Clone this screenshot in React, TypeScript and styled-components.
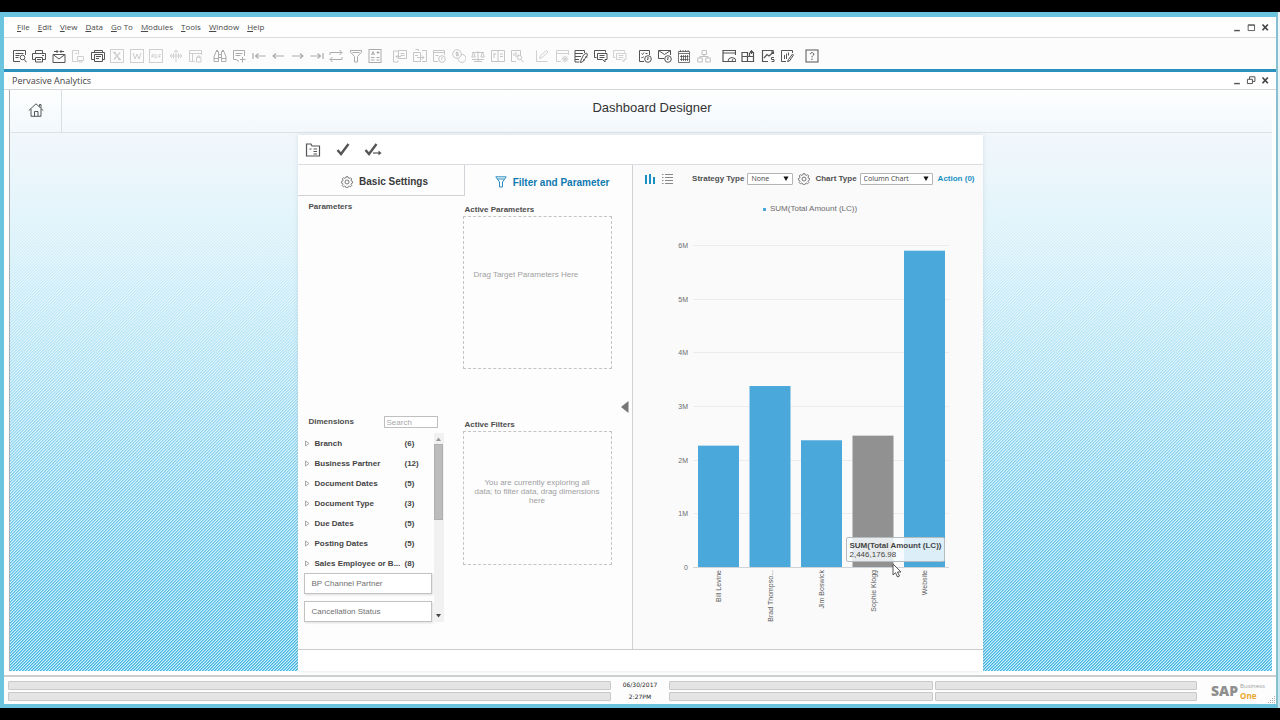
import React from 'react';
import styled, { createGlobalStyle, css } from 'styled-components';

const ui = '"Open Sans", "Noto Sans", sans-serif';
const sans = '"Liberation Sans", Arial, sans-serif';

const GlobalStyle = createGlobalStyle`
  * { box-sizing: border-box; }
  body { margin: 0; background: #000; font-family: ${sans}; font-size: 8px; color: #4a4a4a; }
  button, input, select { font: inherit; color: inherit; margin: 0; }
`;

/* ---------- shell ---------- */

const Screen = styled.div`
  min-height: 100vh;
  padding: 12px 0;
  display: flex;
  background: #000;
`;

const Desktop = styled.div`
  flex: 1;
  min-width: 0;
  display: flex;
  padding-right: 2px;
  background: linear-gradient(#eef6f8, #c4e6ef);
`;

const AppWindow = styled.main`
  flex: 1;
  min-width: 0;
  display: flex;
  flex-direction: column;
  background: #fff;
  border: solid #6ac4de;
  border-width: 5px 2px 4px 4px;
  border-right-color: #86bfcd;
`;

const MenuBar = styled.header`
  display: flex;
  align-items: center;
  height: 21px;
  padding: 0 6px 1px 13px;
  border-bottom: 1px solid #dcdcdc;
  background: #fefefe;
  font-family: ${ui};
`;

const MenuList = styled.nav`
  flex: 1;
  display: flex;
  gap: 8px;
`;

const MenuItem = styled.button`
  padding: 0;
  border: 0;
  background: none;
  line-height: 12px;
  white-space: nowrap;
  color: #4a4a4a;
  u { text-underline-offset: 1px; }
`;

const Controls = styled.div`
  display: flex;
  gap: 4px;
`;

const IconButton = styled.button<{ $size?: number; $color?: string }>`
  display: grid;
  place-items: center;
  flex: none;
  width: ${p => p.$size ?? 14}px;
  height: ${p => p.$size ?? 14}px;
  padding: 0;
  border: 0;
  background: none;
  color: ${p => p.$color ?? '#555'};
  svg { display: block; }
`;

const ToolBar = styled.div`
  display: flex;
  align-items: center;
  gap: 11px;
  height: 31px;
  padding: 4px 9px 0;
  background: #fcfcfc;
`;

const ToolGroup = styled.div<{ $span: number }>`
  display: flex;
  justify-content: space-between;
  width: ${p => p.$span}px;
`;

const TitleBar = styled.div`
  display: flex;
  align-items: center;
  justify-content: space-between;
  height: 21px;
  padding: 0 6px 1px 8px;
  border-top: 3px solid #2a90be;
  border-bottom: 1px solid #d6d6d6;
  font-family: ${ui};
  font-size: 9px;
  color: #444;
`;

const Client = styled.section`
  flex: 1;
  display: flex;
  flex-direction: column;
  margin: 0 4px 4px 5px;
  border-left: 1px solid #a9b0b3;
`;

const PageHeader = styled.div`
  display: grid;
  grid-template-columns: 52px 1fr 52px;
  align-items: stretch;
  height: 43px;
  border-bottom: 1px solid #dbe3e8;
  background: linear-gradient(#fdfefe, #f3f8fc);
`;

const HomeCell = styled.div`
  display: grid;
  place-items: center;
  padding-bottom: 2px;
  border-right: 1px solid #d8dfe3;
`;

const PageTitle = styled.h1`
  margin: 0;
  padding: 9px 0 0 22px;
  text-align: center;
  font-size: 13px;
  line-height: 17px;
  font-weight: 400;
  color: #333;
`;

const Workspace = styled.div`
  flex: 1;
  display: flex;
  justify-content: center;
  padding: 2px 2px 0 0;
  background:
    linear-gradient(#f1f7fb 0%, rgba(240, 248, 252, 0.95) 8%, rgba(236, 249, 253, 0.84) 24%, rgba(230, 247, 253, 0.66) 44%, rgba(222, 245, 253, 0.42) 66%, rgba(214, 243, 253, 0.2) 85%, rgba(210, 242, 253, 0.05) 100%),
    linear-gradient(135deg, #3fafe0 0 25%, #78ceee 25% 42%, #ccf1fb 42% 58%, #3fafe0 58% 75%, #78ceee 75%) 0 0 / 3px 3px;
`;

/* ---------- designer panel ---------- */

const Panel = styled.div`
  display: flex;
  flex-direction: column;
  width: 685px;
  max-width: 100%;
  background: #fff;
  box-shadow: 0 0 4px rgba(120, 150, 165, 0.25);
`;

const PanelTools = styled.div`
  display: flex;
  align-items: center;
  gap: 12px;
  height: 30px;
  padding: 0 6px;
  border-bottom: 1px solid #dcdde2;
`;

const PanelBody = styled.div`
  flex: 1;
  display: grid;
  grid-template-columns: 335fr 350fr;
`;

const PanelFooter = styled.div`
  height: 22px;
  border-top: 1px solid #ccc;
`;

const SettingsPane = styled.div`
  position: relative;
  border-right: 1px solid #d2d2d6;
  background: #fdfdfe;
`;

const Tabs = styled.div`
  display: grid;
  grid-template-columns: 1fr 1fr;
`;

const Tab = styled.button<{ $active?: boolean }>`
  display: flex;
  align-items: center;
  justify-content: center;
  gap: 6px;
  height: 31px;
  padding: 3px 0 0 8px;
  border: 0;
  background: none;
  font-size: 10px;
  font-weight: 700;
  color: #3a3a3a;
  ${p => p.$active
    ? css`color: #1079b0;`
    : css`border: solid #d2d2d8; border-width: 0 1px 1px 0;`}
`;

const Columns = styled.div`
  display: grid;
  grid-template-columns: 165px 149px;
  grid-template-rows: 215px auto;
`;

const SourceCell = styled.div`
  padding: 4px 19px 0 6px;
`;

const TargetCell = styled.div`
  padding-top: 7px;
`;

const Heading = styled.h2<{ $indent: number }>`
  margin: 0;
  padding-left: ${p => p.$indent}px;
  font-size: 8px;
  line-height: 13px;
  font-weight: 700;
  color: #4d4d4d;
`;

const DropZone = styled.div<{ $height: number; $centered?: boolean }>`
  height: ${p => p.$height}px;
  padding: ${p => (p.$centered ? '46px 0 0' : '53px 10px 0')};
  border: 1px dashed #c4c4c4;
  line-height: 9px;
  text-align: ${p => (p.$centered ? 'center' : 'left')};
  white-space: pre-line;
  color: #a0a0a0;
`;

const DimensionsHead = styled.div`
  display: flex;
  align-items: flex-end;
  justify-content: space-between;
  padding: 0 6px 5px 0;
`;

const SearchBox = styled.input`
  width: 54px;
  height: 12px;
  padding: 0 2px;
  border: 1px solid #bfbfbf;
  background: #fff;
  &::placeholder { color: #a8a8a8; opacity: 1; }
`;

const ListFrame = styled.div`
  display: grid;
  grid-template-columns: 1fr 10px;
`;

const DimensionList = styled.ul`
  margin: 0;
  padding: 0 2px 0 0;
  list-style: none;
`;

const DimensionRow = styled.li`
  display: grid;
  grid-template-columns: 11px 90px 1fr;
  align-items: center;
  height: 20px;
  font-weight: 700;
  white-space: nowrap;
  color: #444;
`;

const FieldCard = styled.li`
  height: 21px;
  padding-left: 7px;
  margin-bottom: 7px;
  border: 1px solid #c2c2c2;
  box-shadow: 1px 1px 2px #ddd;
  background: #fff;
  line-height: 19px;
  color: #707070;
  &:last-child { margin-bottom: 0; }
`;

const ScrollTrack = styled.div`
  display: flex;
  flex-direction: column;
  align-items: center;
  padding: 4px 0;
  background: #f1f1f1;
`;

const ScrollThumb = styled.div`
  width: 9px;
  height: 76px;
  margin: 3px 0 auto;
  background: #bcbcbc;
  border: 1px solid #b0b0b0;
`;

const Collapse = styled.button`
  position: absolute;
  top: 50%;
  right: 3px;
  width: 8px;
  height: 12px;
  margin-top: -6px;
  padding: 0;
  border: 0;
  background: none;
  svg { display: block; }
`;

/* ---------- chart pane ---------- */

const ChartPane = styled.div`
  background: #fafafb;
`;

const ChartTools = styled.div`
  display: flex;
  align-items: center;
  height: 27px;
  padding: 0 8px 0 12px;
  gap: 5px;
`;

const ChartField = styled.label`
  display: flex;
  align-items: center;
  gap: 3px;
  font-weight: 700;
  white-space: nowrap;
  color: #505050;
`;

const SelectBox = styled.span<{ $width: number }>`
  position: relative;
  display: block;
  width: ${p => p.$width}px;
  height: 12px;
  svg { position: absolute; right: 4px; top: 3px; pointer-events: none; }
`;

const Select = styled.select`
  display: block;
  width: 100%;
  height: 12px;
  padding: 0 3px;
  appearance: none;
  border: 1px solid #b4b4b4;
  border-radius: 1px;
  background: #fff;
  font-family: ${ui};
  font-size: 7px;
  font-weight: 400;
  line-height: 10px;
  color: #444;
`;

const ViewSwitch = styled.div`
  display: flex;
  gap: 5px;
  margin-right: auto;
`;

const ActionLink = styled.a`
  font-weight: 700;
  text-decoration: none;
  white-space: nowrap;
  color: #1a8fc4;
`;

const ChartArea = styled.div`
  position: relative;
`;

const Chart = styled.svg`
  display: block;
  width: 100%;
  height: auto;
`;

const Tooltip = styled.div`
  position: absolute;
  left: 213px;
  top: 345px;
  width: 99px;
  height: 25px;
  padding: 3px;
  border: 1px solid #b4bcc0;
  border-radius: 2px;
  background: rgba(246, 250, 253, 0.85);
  line-height: 9px;
  white-space: nowrap;
  color: #444;
  strong { display: block; }
`;

const Pointer = styled.svg`
  position: absolute;
  left: 259px;
  top: 371px;
`;

/* ---------- status bar ---------- */

const StatusBar = styled.footer`
  display: flex;
  align-items: center;
  height: 29px;
  padding: 1px 0 0 4px;
  border-top: 2px solid #cdcfcf;
  background: #fdfdfd;
`;

const StatusStack = styled.div<{ $grow: number }>`
  flex: ${p => p.$grow} 1 0;
  display: grid;
  gap: 2px;
  margin-right: 2px;
`;

const StatusField = styled.div`
  height: 9px;
  border: 1px solid #c9c9c9;
  border-radius: 1px;
  background: #e5e4e4;
`;

const Clock = styled.div`
  display: grid;
  gap: 2px;
  width: 56px;
  padding-right: 2px;
  text-align: center;
  font-family: "DejaVu Sans", sans-serif;
  font-size: 6px;
  line-height: 10px;
  color: #222;
`;

const Brand = styled.div`
  display: flex;
  align-items: center;
  gap: 2px;
  width: 69px;
  padding-left: 12px;
  font-family: ${ui};
`;

const BrandMark = styled.span`
  font-size: 14px;
  line-height: 20px;
  font-weight: 800;
  color: #8f8f8f;
`;

const BrandName = styled.span`
  display: grid;
  font-size: 6px;
  line-height: 8px;
  color: #9c9c9c;
  b { font-size: 8px; line-height: 11px; font-weight: 700; color: #eaa62c; }
`;

const Grip = styled.svg`
  align-self: flex-end;
  flex: none;
`;

/* ---------- icons ---------- */

const Glyph = ({ children, size = 14 }: { children: React.ReactNode; size?: number }) => (
  <svg width={size} height={size} viewBox="0 0 14 14" fill="none" stroke="currentColor" strokeWidth="1" aria-hidden="true">
    {children}
  </svg>
);

const clockBadge = <><circle cx="10" cy="10" r="3.3" /><path d="M10 8v2.4h-1" /></>;
const bubble = (
  <>
    <path d="M.5 8.500V1.500h11v2" />
    <path d="M3.500 4.500h9.500v6h-2v2.500l-2.500-2.500h-5z" />
    <path d="M5.500 6.500h5M5.500 8.500h5M.5 8.500h2" />
  </>
);

const glyphs: Record<string, React.ReactNode> = {
  Preview: <><path d="M7 12.500H.5v-11h12V6M2.500 4.500h8M2.500 6.500h4M2.500 8.500h3" /><circle cx="9.500" cy="8.500" r="2.300" /><path d="M11 10.300l2.500 3" /></>,
  Print: <><path d="M3.500 4.500v-3h7v3M3.500 10.500h-3v-6h13v6h-3M3.500 8.500h7v4.500h-7zM5 10.500h4M10 6.500h2" /></>,
  'Send mail': <><path d="M1 5.500h12v8H1zM1 5.500l6 4.500 6-4.500M2 2.500h4M8 2.500h4M4.500 1L6 2.500 4.500 4M9.500 1L8 2.500 9.500 4" /></>,
  Fax: <><path d="M7 12.500H1.500v-11h6v4M4 4.500h2M6.500 7.500h6v4h-6zM8 11.500v1.500h3v-1.500" /></>,
  'Print layout': <><path d="M3.500 3.500v-2h8v2M3.500 10.500h-3v-7h13v7h-2M3.500 5.500h8v7h-8zM5 7.500h5M5 9.500h3" /></>,
  'Export to Excel': <><rect x=".5" y=".5" width="13" height="13" /><path d="M4 3.500l6 7M10 3.500l-6 7M3 3.500h3M8 10.500h3" strokeWidth="1.400" /></>,
  'Export to Word': <><rect x=".5" y=".5" width="13" height="13" /><path d="M3 4l2 6 2-5 2 5 2-6" /></>,
  'Export to PDF': <><rect x=".5" y=".5" width="13" height="13" /><path d="M3 9V5.500h1.500v2H3M6 9V5.500h1l1 1v1.500L7 9H6M10 9V5.500h2M10 7.500h1.500" strokeWidth=".8" /></>,
  'Launch application': <><path d="M7 1v12M1 7h12M5 3l2-2 2 2M3 5L1 7l2 2M11 5l2 2-2 2M4.500 4.500v5M9.500 4.500v5" /></>,
  'Lock screen': <><path d="M7 12.500H1.500v-11h12V6M1.500 4.500h12M4.500 4.500v8" /><path d="M8.500 8.500h4.500v4.500H8.500zM9.500 8.500V7h2.500v1.500" /></>,
  Find: <><path d="M1 12.500V8l2-5.500h2.500v10zM13 12.500V8l-2-5.500H8.500v10zM5.500 5.500h3M5.500 8.500h3M1 9.500h4.500M8.500 9.500H13M3 1.500h2M9 1.500h2" /></>,
  Add: <><path d="M7 12.500l-3-2H1.500v-9h11V7M3.500 4.500h7M3.500 6.500h5M10.500 8v5.500M8 10.500h5.500" /></>,
  'First record': <path d="M1 4v6M13.500 7h-10M6.500 4.500L3.500 7l3 2.500" strokeWidth="1.200" />,
  'Previous record': <path d="M13 7H2M5 4.500L2 7l3 2.500" strokeWidth="1.200" />,
  'Next record': <path d="M1 7h11M9 4.500L12 7 9 9.500" strokeWidth="1.200" />,
  'Last record': <path d="M13 4v6M.5 7h10M7.500 4.500L10.500 7l-3 2.500" strokeWidth="1.200" />,
  Refresh: <path d="M1 6V3.500h12M10.500 1L13 3.500 10.500 6M13 8v2.500H1M3.500 8L1 10.500 3.500 13" />,
  Filter: <path d="M1.500 1.500h11v1.500L8.500 7.500v5.500h-3V7.500L1.500 3zM3.500 3.500h7" />,
  Sort: <><rect x="1" y=".5" width="12" height="13" /><path d="M3.500 6l1.500-3.500L6.500 6M4 5h2M8.500 3.500h3M10 2v3M3 8.500h3.500M3 11h3.500M8.500 8.500h3M8.500 11h3" /></>,
  'Base document': <><path d="M5 11.500v1.500H.5v-11H5M5.500 1.500h8v8h-8zM7.500 4.500h4M7.500 6.500h4M8 7.500H3M5 5.500l-2 2 2 2" /></>,
  'Target document': <><path d="M5.500 2V.5h-3M.5 3.500h7v9h-7zM9 1.500h4.500v11H9M2 6.500h3M4 8.500h7M9 6.500l2 2-2 2" /></>,
  'Gross profit': <><path d="M6 12.500H1.500v-11h11V6M1.500 3.500h11M3.500 6.500h3" />{clockBadge}</>,
  'Payment means': <><circle cx="5" cy="5" r="4.300" /><path d="M6.500 3.500H4v1.500h2.500v1.500H4M5 2.500v5M9 5.500a4 4 0 1 1-3 4.500" /></>,
  'Volume and weight': <path d="M7 2v10M3 12.500h8M1 3.500h12M2.500 3.500L.8 8h3.500zM11.500 3.500L9.800 8h3.500zM1 10.500h12" />,
  'Transaction journal': <path d="M.5 1.500h13v11H.5zM7 1.500v11M3 4v5M5 5H3M9 5h3M9 7.500h3" />,
  'Journal preview': <><path d="M6 12.500H1.500v-11h9V6M4 4v3M6 3v5M8 5.500v2" /><circle cx="9.500" cy="8.500" r="2.200" /><path d="M11 10.300l2.500 3" /></>,
  'Edit layout': <path d="M1.500 1.500v11h11M4.500 9.500l1-3 6-5 1.500 1.500-6 5.500z" />,
  'Form settings': <><path d="M6 12.500H1.500v-11h12V6M1.500 4.500h12" /><circle cx="10" cy="10" r="2.200" /><path d="M10 6.500v7M6.500 10h7M7.500 7.500l5 5M12.500 7.500l-5 5" strokeWidth=".7" /></>,
  'Query manager': <><path d="M5.500 13H1V1.500h9.500V4M1 4.500h8M1 7.500h6M1 10.500h4" /><path d="M9.500 6l3-2 1 2-5 7-2 .5.500-2.500zM11 8h2.500M9 11h2" /></>,
  Messages: bubble,
  'Message log': bubble,
  'Activity overview': <><path d="M6 12.500H1.500v-11h10V6M3.500 4.500l1 1 1.500-2M7.500 4.500h2M3.500 8l1 1 1-1.500" />{clockBadge}</>,
  Alerts: <><path d="M6 9.500H.5v-8h12V6M.5 1.500l6 4 6-4" />{clockBadge}</>,
  Calendar: <path d="M1.500 2.500h11v11h-11zM1.500 4.500h11M3.500 1v2M6 1v2M8.500 1v2M11 1v2M4.500 6v6M6.500 6v6M8.500 6v6M10.500 6v6M3 7.500h8.500M3 10.500h8.500" strokeWidth=".8" />,
  'Organization chart': <path d="M5 1.500h4.500v4H5zM.8 9h4.500v4H.8zM8.800 9h4.500v4H8.800zM7 5.500v2M3 9V7.500h8V9" />,
  'Work centre': <><path d="M6 12.500H1V1.500h12.500V6M1 4h12.500" strokeWidth="1.200" /><path d="M6 12.500a4 4 0 1 1 8 0zM10 12l1-2" /></>,
  Cockpit: <path d="M1 3.500h5.500v4H1zM1 7.500h5.500v5H1zM6.500 7.500H12.500v5h-6zM8.500 3.500h4v4M8.500 7.500V4M10.500 1v4M9 2.500h3" strokeWidth="1.200" />,
  'Sales analysis': <><path d="M7 12.500H1.500v-11H12V5M3 9l3-3.500 2 1.500 4.500-4M10 3h2.500v2" strokeWidth="1.200" /><path d="M13 8.500h-2.500v2H13v2h-2.500" /></>,
  'Pervasive designer': <path d="M6 12.500H1.500v-11h11V4M4.500 6v4M6.500 4.500v5.500M8.500 3.500v3M8.500 10.500l4-5.500 1 1-4 6-2 .5z" />,
  Help: <><rect x="1" y="1" width="12" height="12" /><path d="M5.300 5.200c0-2.200 3.500-2 3.500 0C8.800 6.500 7 6.500 7 8.300M7 9.500V11" /></>,
};

const toolGroups: { span: number; tone: string; items: string[] }[] = [
  { span: 189, tone: '#cfcfcf', items: ['Preview', 'Print', 'Send mail', 'Fax', 'Print layout', 'Export to Excel', 'Export to Word', 'Export to PDF', 'Launch application', 'Lock screen'] },
  { span: 169, tone: '#acacac', items: ['Find', 'Add', 'First record', 'Previous record', 'Next record', 'Last record', 'Refresh', 'Filter', 'Sort'] },
  { span: 131, tone: '#c6c6c6', items: ['Base document', 'Target document', 'Gross profit', 'Payment means', 'Volume and weight', 'Transaction journal', 'Journal preview'] },
  { span: 92, tone: '#d0d0d0', items: ['Edit layout', 'Form settings', 'Query manager', 'Messages', 'Message log'] },
  { span: 73, tone: '#c0c0c0', items: ['Activity overview', 'Alerts', 'Calendar', 'Organization chart'] },
  { span: 72, tone: '#c0c0c0', items: ['Work centre', 'Cockpit', 'Sales analysis', 'Pervasive designer'] },
  { span: 14, tone: '#c0c0c0', items: ['Help'] },
];

const enabledTools = new Set([
  'Preview', 'Print', 'Send mail', 'Print layout', 'Query manager', 'Messages', 'Activity overview',
  'Alerts', 'Calendar', 'Work centre', 'Cockpit', 'Sales analysis', 'Pervasive designer', 'Help',
]);

const GearIcon = () => (
  <svg width="12" height="12" viewBox="0 0 12 12" fill="none" stroke="#777" aria-hidden="true">
    <circle cx="6" cy="6" r="2" />
    <path strokeLinejoin="round" d="M5.100 .7h1.800l.4 1.300 1 .4 1.200-.7 1.200 1.200-.7 1.200.4 1 1.200.400v1.500l-1.200.4-.4 1 .7 1.200-1.200 1.200-1.200-.7-1 .4-.4 1.300H5.100l-.4-1.300-1-.4-1.200.7-1.200-1.200.7-1.200-.4-1-1.200-.4V5.500l1.200-.4.4-1-.7-1.200 1.200-1.200 1.200.7 1-.4z" />
  </svg>
);

const MinimizeIcon = () => <Glyph size={10}><path d="M3 12h8" stroke="#555" strokeWidth="2" /></Glyph>;
const MaximizeIcon = () => <Glyph size={10}><path d="M3 4h9v8H3zM3 4.500h9" stroke="#555" strokeWidth="1.300" /></Glyph>;
const RestoreIcon = () => <Glyph size={10}><path d="M2 6h7v6H2zM5 6V2.500h7.500V9H9" stroke="#555" strokeWidth="1.400" /></Glyph>;
const CloseIcon = () => <Glyph size={10}><path d="M3.500 3.500l7.500 8M11 3.500l-7.500 8" stroke="#444" strokeWidth="2.400" /></Glyph>;
const DropArrow = () => <svg width="6" height="5" viewBox="0 0 6 5" aria-hidden="true"><path d="M.5 .5h5L3 5z" fill="#111" /></svg>;

/* ---------- data ---------- */

const menus = ['File', 'Edit', 'View', 'Data', 'Go To', 'Modules', 'Tools', 'Window', 'Help'];

const dimensions: [string, number][] = [
  ['Branch', 6],
  ['Business Partner', 12],
  ['Document Dates', 5],
  ['Document Type', 3],
  ['Due Dates', 5],
  ['Posting Dates', 5],
  ['Sales Employee or B...', 8],
];

const fields = ['BP Channel Partner', 'Cancellation Status'];

const series = [
  { name: 'Bill Levine', value: 2.26 },
  { name: 'Brad Thompso...', value: 3.37 },
  { name: 'Jim Boswick', value: 2.36 },
  { name: 'Sophie Klogg', value: 2.446, hovered: true },
  { name: 'Website', value: 5.89 },
];

const baseline = 375;
const unit = 53.7;

const ColumnChart = () => (
  <Chart viewBox="0 0 350 446" fontFamily={sans} role="img" aria-label="SUM(Total Amount (LC)) by sales employee">
    <rect x="130" y="16" width="3" height="3" fill="#4ba8db" />
    <text x="137" y="19" fontSize="8" fill="#6c6c6c">SUM(Total Amount (LC))</text>
    {[0, 1, 2, 3, 4, 5, 6].map(n => {
      const y = Math.round(baseline - n * unit);
      return (
        <g key={n}>
          <path d={`M60 ${y + 0.5}H316`} stroke={n ? '#ececec' : '#cfd4d8'} />
          <text x="55" y={y + 3} fontSize="7" fill="#6c6c6c" textAnchor="end">{n ? `${n}M` : '0'}</text>
        </g>
      );
    })}
    {series.map((s, i) => {
      const x = 65 + i * 51.5;
      return (
        <g key={s.name}>
          <rect x={x} y={baseline - s.value * unit} width="41" height={s.value * unit} fill={s.hovered ? '#919191' : '#4ba8db'} />
          <text transform={`translate(${x + 23} ${baseline + 3}) rotate(-90)`} fontSize="7" fill="#5c5c5c" textAnchor="end">{s.name}</text>
        </g>
      );
    })}
  </Chart>
);

export default function App() {
  return (
    <Screen>
      <GlobalStyle />
      <Desktop>
        <AppWindow>
          <MenuBar>
            <MenuList>
              {menus.map(m => <MenuItem key={m}><u>{m[0]}</u>{m.slice(1)}</MenuItem>)}
            </MenuList>
            <Controls>
              <IconButton $size={10} aria-label="Minimize"><MinimizeIcon /></IconButton>
              <IconButton $size={10} aria-label="Maximize"><MaximizeIcon /></IconButton>
              <IconButton $size={10} aria-label="Close"><CloseIcon /></IconButton>
            </Controls>
          </MenuBar>
          <ToolBar>
            {toolGroups.map(g => (
              <ToolGroup key={g.items[0]} $span={g.span}>
                {g.items.map(name => (
                  <IconButton key={name} aria-label={name} $color={enabledTools.has(name) ? '#555' : g.tone}>
                    <Glyph>{glyphs[name]}</Glyph>
                  </IconButton>
                ))}
              </ToolGroup>
            ))}
          </ToolBar>
          <TitleBar>
            <span>Pervasive Analytics</span>
            <Controls>
              <IconButton $size={10} aria-label="Minimize document"><MinimizeIcon /></IconButton>
              <IconButton $size={10} aria-label="Restore document"><RestoreIcon /></IconButton>
              <IconButton $size={10} aria-label="Close document"><CloseIcon /></IconButton>
            </Controls>
          </TitleBar>

          <Client>
            <PageHeader>
              <HomeCell>
                <IconButton $size={16} aria-label="Home">
                  <svg width="16" height="14" viewBox="0 0 16 14" fill="none" stroke="#555">
                    <path d="M.8 7.500L8 .8l7.200 6.700M3 6v7.300h10V6M6.500 13V8.500h3.500V13M11.500 3.500v-2h1.500v3.500" />
                  </svg>
                </IconButton>
              </HomeCell>
              <PageTitle>Dashboard Designer</PageTitle>
            </PageHeader>

            <Workspace>
              <Panel>
                <PanelTools>
                  <IconButton $size={18} aria-label="Open folder">
                    <svg width="16" height="14" viewBox="0 0 16 14" fill="none" stroke="#555" strokeWidth="1.200">
                      <path d="M1.500 13V1h4.500l1 2h7.500v10zM4.500 6h2M8.500 6H12M8.500 8.500H12M8.500 11H12" />
                    </svg>
                  </IconButton>
                  <IconButton $size={18} aria-label="Save">
                    <svg width="14" height="13" viewBox="0 0 14 13" fill="none" stroke="#555" strokeWidth="2.400">
                      <path d="M1.500 7l3.500 4L12.500 1" />
                    </svg>
                  </IconButton>
                  <IconButton $size={18} aria-label="Save as">
                    <svg width="18" height="13" viewBox="0 0 18 13" fill="none" stroke="#555" strokeWidth="2.400">
                      <path d="M1.500 7l3.500 4L12.500 1" />
                      <path d="M9 10h6" strokeWidth="1.200" />
                      <path d="M14.500 7.500l3 2.500-3 2.500z" fill="#555" stroke="none" />
                    </svg>
                  </IconButton>
                </PanelTools>

                <PanelBody>
                  <SettingsPane>
                    <Tabs>
                      <Tab><GearIcon />Basic Settings</Tab>
                      <Tab $active>
                        <svg width="12" height="12" viewBox="0 0 12 12" fill="none" stroke="#2a8cc0" aria-hidden="true">
                          <path d="M.8 .8h10.400L7.500 6v5h-3V6zM2.500 3h7" />
                        </svg>
                        Filter and Parameter
                      </Tab>
                    </Tabs>
                    <Columns>
                      <SourceCell>
                        <Heading $indent={5}>Parameters</Heading>
                      </SourceCell>
                      <TargetCell>
                        <Heading $indent={2}>Active Parameters</Heading>
                        <DropZone $height={153}>Drag Target Parameters Here</DropZone>
                      </TargetCell>
                      <SourceCell>
                        <DimensionsHead>
                          <Heading $indent={5}>Dimensions</Heading>
                          <SearchBox type="text" placeholder="Search" aria-label="Search dimensions" />
                        </DimensionsHead>
                        <ListFrame>
                          <DimensionList>
                            {dimensions.map(([name, count]) => (
                              <DimensionRow key={name}>
                                <svg width="6" height="7" viewBox="0 0 6 7" fill="none" stroke="#a8a8a8" aria-hidden="true">
                                  <path d="M1.500 1L5 3.500 1.500 6z" />
                                </svg>
                                <span>{name}</span>
                                <span>({count})</span>
                              </DimensionRow>
                            ))}
                            {fields.map(f => <FieldCard key={f}>{f}</FieldCard>)}
                          </DimensionList>
                          <ScrollTrack>
                            <svg width="5" height="4" viewBox="0 0 5 4" aria-hidden="true"><path d="M0 4h5L2.500 .5z" fill="#999" /></svg>
                            <ScrollThumb />
                            <svg width="5" height="4" viewBox="0 0 5 4" aria-hidden="true"><path d="M0 0h5L2.500 3.500z" fill="#444" /></svg>
                          </ScrollTrack>
                        </ListFrame>
                      </SourceCell>
                      <TargetCell>
                        <Heading $indent={2}>Active Filters</Heading>
                        <DropZone $height={134} $centered>
                          {'You are currently exploring all\ndata; to filter data, drag dimensions\nhere'}
                        </DropZone>
                      </TargetCell>
                    </Columns>
                    <Collapse aria-label="Collapse settings">
                      <svg width="8" height="12" viewBox="0 0 8 12"><path d="M7.500 0v12L0 6z" fill="#777" /></svg>
                    </Collapse>
                  </SettingsPane>

                  <ChartPane>
                    <ChartTools>
                      <ViewSwitch>
                        <IconButton $size={12} aria-label="Chart view">
                          <svg width="12" height="12" viewBox="0 0 12 12" fill="#1a8fc4"><path d="M0 2h2v9H0zM4 1h2v10H4zM8 4h2v7H8z" /></svg>
                        </IconButton>
                        <IconButton $size={12} aria-label="List view">
                          <svg width="12" height="12" viewBox="0 0 12 12" stroke="#888"><path d="M0 1.500h1.500M3 1.500h8M0 4.500h1.500M3 4.500h8M0 7.500h1.500M3 7.500h8M0 10.500h1.500M3 10.500h8" /></svg>
                        </IconButton>
                      </ViewSwitch>
                      <ChartField>
                        Strategy Type
                        <SelectBox $width={46}>
                          <Select><option>None</option></Select>
                          <DropArrow />
                        </SelectBox>
                      </ChartField>
                      <IconButton $size={12} aria-label="Strategy settings"><GearIcon /></IconButton>
                      <ChartField>
                        Chart Type
                        <SelectBox $width={73}>
                          <Select><option>Column Chart</option></Select>
                          <DropArrow />
                        </SelectBox>
                      </ChartField>
                      <ActionLink href="#actions">Action (0)</ActionLink>
                    </ChartTools>
                    <ChartArea>
                      <ColumnChart />
                      <Tooltip><strong>SUM(Total Amount (LC))</strong>2,446,176.98</Tooltip>
                      <Pointer width="10" height="15" viewBox="0 0 10 15" aria-hidden="true">
                        <path d="M1 1v11l2.500-2.300 2 4.300 2-1-2-4H9z" fill="#fff" stroke="#555" />
                      </Pointer>
                    </ChartArea>
                  </ChartPane>
                </PanelBody>
                <PanelFooter />
              </Panel>
            </Workspace>
          </Client>

          <StatusBar>
            <StatusStack $grow={603}><StatusField /><StatusField /></StatusStack>
            <Clock><span>06/30/2017</span><span>2:27PM</span></Clock>
            <StatusStack $grow={264}><StatusField /><StatusField /></StatusStack>
            <StatusStack $grow={262}><StatusField /><StatusField /></StatusStack>
            <Brand>
              <BrandMark>SAP</BrandMark>
              <BrandName>Business<b>One</b></BrandName>
            </Brand>
            <Grip width="8" height="8" viewBox="0 0 8 8" fill="#aaa" aria-hidden="true">
              <path d="M6 0h1v1H6zM4 2h1v1H4zM6 2h1v1H6zM2 4h1v1H2zM4 4h1v1H4zM6 4h1v1H6zM0 6h1v1H0zM2 6h1v1H2zM4 6h1v1H4zM6 6h1v1H6z" />
            </Grip>
          </StatusBar>
        </AppWindow>
      </Desktop>
    </Screen>
  );
}
